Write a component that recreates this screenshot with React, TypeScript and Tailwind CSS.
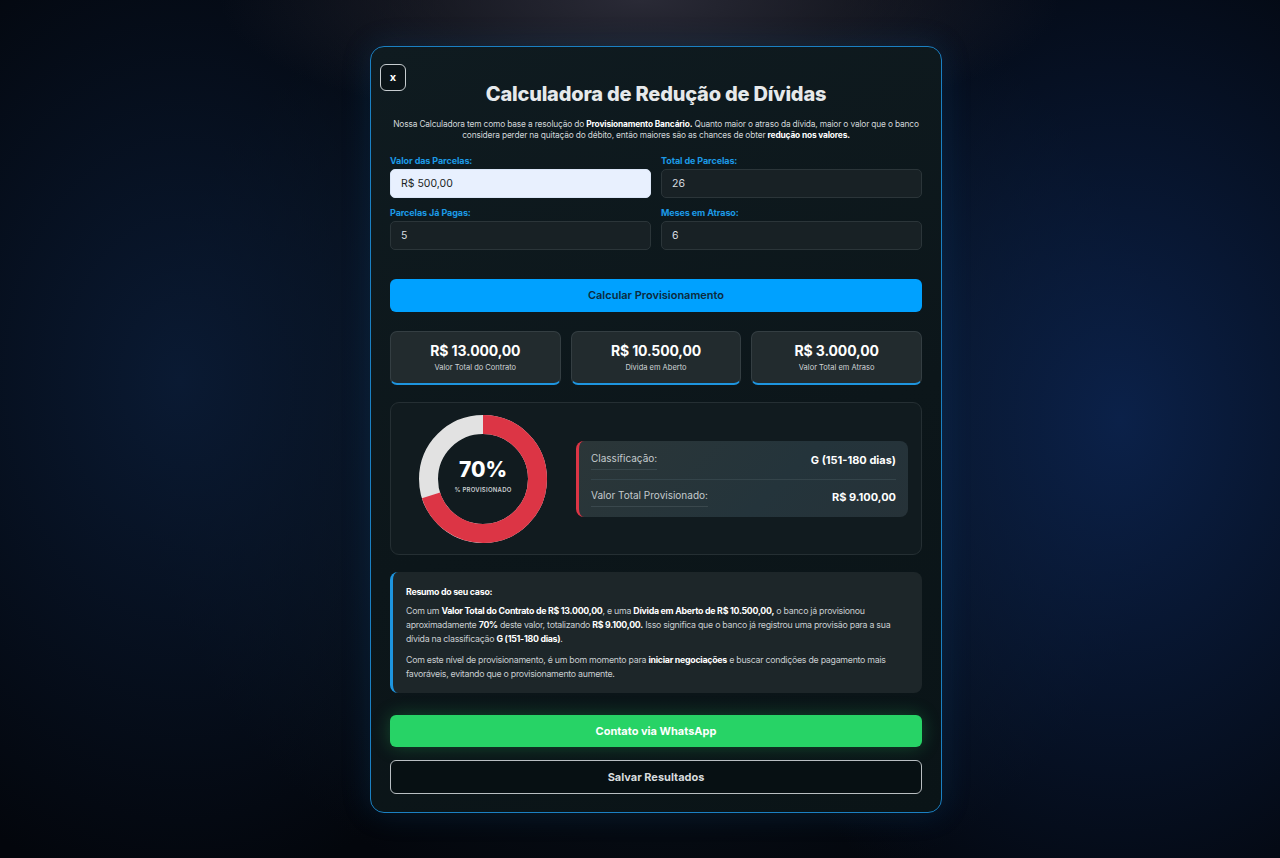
import React from "react";

const stats = [
  { value: "R$ 13.000,00", label: "Valor Total do Contrato" },
  { value: "R$ 10.500,00", label: "Dívida em Aberto" },
  { value: "R$ 3.000,00", label: "Valor Total em Atraso" },
];

function Field({ label, value, filled }: { label: string; value: string; filled?: boolean }) {
  return <div className="flex flex-col">
    <label className="mb-[2px] text-[9px] font-bold leading-[12px] tracking-[-0.01em] text-[#1c9ae6]">{label}</label>
    <input
      readOnly
      value={value}
      className={filled
        ? "h-[29px] rounded-[5px] border border-[#dbe6f7] bg-[#e8f0fe] px-[10px] text-[10.5px] text-[#1b1f24] outline-none"
        : "h-[29px] rounded-[5px] border border-[#2b3539] bg-[#182125] px-[10px] text-[10.5px] text-[#d9dee1] outline-none"}
    />
  </div>;
}

function Donut({ percent }: { percent: number }) {
  const r = 54.5;
  const c = 2 * Math.PI * r;
  return <div className="relative h-[128px] w-[128px] shrink-0">
    <svg width="128" height="128" viewBox="0 0 128 128" className="-rotate-90">
      <circle cx="64" cy="64" r={r} fill="none" stroke="#e2e2e2" strokeWidth="19" />
      <circle cx="64" cy="64" r={r} fill="none" stroke="#dc3545" strokeWidth="19" strokeDasharray={`${c * percent} ${c}`} />
    </svg>
    <div className="absolute inset-0 flex flex-col items-center justify-center">
      <span className="mt-[-6px] text-[21px] font-extrabold leading-[24px] text-white">{Math.round(percent * 100)}%</span>
      <span className="mt-[3px] text-[6px] font-semibold tracking-[0.04em] text-[#c9cfd2]">% PROVISIONADO</span>
    </div>
  </div>;
}

export default function App() {
  return <div
    className="flex h-[858px] w-full items-start justify-center overflow-hidden bg-[#03060c] bg-[radial-gradient(ellipse_420px_130px_at_640px_0px,#2a2a36_0%,transparent_100%),radial-gradient(ellipse_380px_520px_at_180px_380px,#0a1a33_0%,transparent_100%),radial-gradient(ellipse_420px_560px_at_1120px_420px,#0b2149_0%,transparent_100%),radial-gradient(ellipse_520px_500px_at_656px_430px,#0e1c28_0%,transparent_100%)] pl-[32px] pt-[46px]"
    style={{ fontFamily: "Inter, 'Noto Sans', sans-serif" }}
  >
    <div className="relative flex w-[572px] flex-col rounded-[14px] border border-[#1b80c2] bg-[linear-gradient(160deg,#0f1b20_0%,#0c161a_55%,#0a1417_100%)] px-[19px] pb-[18px] pt-[33px] shadow-[0_0_30px_rgba(20,110,190,0.18)]">
      <button className="absolute left-[9px] top-[17px] flex h-[27px] w-[26px] items-center justify-center rounded-[6px] border border-[#c7cdd0] bg-[#0b1418] text-[11px] font-bold text-white">x</button>

      <h1 className="text-center text-[20px] font-extrabold leading-[28px] tracking-[-0.01em] text-[#e6e9eb]">Calculadora de Redução de Dívidas</h1>
      <p className="mt-[11px] text-center text-[8.4px] leading-[11px] tracking-[-0.02em] text-[#d1d6d9]">
        Nossa Calculadora tem como base a resolução do <b className="text-white">Provisionamento Bancário.</b> Quanto maior o atraso da dívida, maior o valor que o banco considera perder na quitação do débito, então maiores são as chances de obter <b className="text-white">redução nos valores.</b>
      </p>

      <div className="mt-[14px] grid grid-cols-2 gap-x-[10px] gap-y-[9px]">
        <Field label="Valor das Parcelas:" value="R$ 500,00" filled />
        <Field label="Total de Parcelas:" value="26" />
        <Field label="Parcelas Já Pagas:" value="5" />
        <Field label="Meses em Atraso:" value="6" />
      </div>

      <button className="mt-[29px] h-[33px] rounded-[6px] bg-[#00a1ff] text-[11px] font-semibold text-[#0c2a3c]">Calcular Provisionamento</button>

      <div className="mt-[19px] grid grid-cols-3 gap-[10px]">
        {stats.map((s) => <div key={s.label} className="flex h-[54px] flex-col items-center justify-center rounded-[7px] border border-b-2 border-[#343e42] border-b-[#1e95df] bg-[#222b2e]">
          <span className="text-[14px] font-bold leading-[18px] tracking-[-0.01em] text-white">{s.value}</span>
          <span className="mt-[3px] text-[7.5px] leading-[10px] text-[#cfd4d6]">{s.label}</span>
        </div>)}
      </div>

      <div className="mt-[17px] flex h-[153px] items-center gap-[29px] rounded-[9px] border border-[#252f33] bg-[#111b1f] pl-[28px] pr-[13px]">
        <Donut percent={0.7} />
        <div className="flex h-[76px] flex-1 flex-col justify-center rounded-[8px] border-l-[3px] border-[#dc3545] bg-[linear-gradient(135deg,#2b3638_0%,#24343b_60%,#263238_100%)] pl-[12px] pr-[12px]">
          <div className="flex items-center justify-between border-b border-[#34444a] pb-[9px]">
            <span className="border-b border-[#3a484d] pb-[3px] text-[10px] text-[#c4cacd]">Classificação:</span>
            <span className="text-[11px] font-bold text-white">G (151-180 dias)</span>
          </div>
          <div className="flex items-center justify-between pt-[8px]">
            <span className="border-b border-[#3a484d] pb-[3px] text-[10px] text-[#c4cacd]">Valor Total Provisionado:</span>
            <span className="text-[11px] font-bold text-white">R$ 9.100,00</span>
          </div>
        </div>
      </div>

      <div className="mt-[17px] rounded-[8px] border-l-[3px] border-[#1e95df] bg-[#1d2629] px-[13px] pb-[12px] pt-[13px] text-[8.8px] leading-[14px] tracking-[-0.03em] text-[#c9ced1]">
        <p className="font-bold text-white">Resumo do seu caso:</p>
        <p className="mt-[5px]">
          Com um <b className="text-white">Valor Total do Contrato de R$ 13.000,00</b>, e uma <b className="text-white">Dívida em Aberto de R$ 10.500,00,</b> o banco já provisionou aproximadamente <b className="text-white">70%</b> deste valor, totalizando <b className="text-white">R$ 9.100,00.</b> Isso significa que o banco já registrou uma provisão para a sua dívida na classificação <b className="text-white">G (151-180 dias)</b>.
        </p>
        <p className="mt-[7px]">
          Com este nível de provisionamento, é um bom momento para <b className="text-white">iniciar negociações</b> e buscar condições de pagamento mais favoráveis, evitando que o provisionamento aumente.
        </p>
      </div>

      <button className="mt-[22px] h-[32px] rounded-[6px] bg-[#27d366] text-[11px] font-bold text-white shadow-[0_0_18px_rgba(39,211,102,0.28)]">Contato via WhatsApp</button>
      <button className="mt-[13px] h-[34px] rounded-[6px] border border-[#b9bfc2] bg-[#071013] text-[11px] font-bold text-[#d8dcde]">Salvar Resultados</button>
    </div>
  </div>;
}
